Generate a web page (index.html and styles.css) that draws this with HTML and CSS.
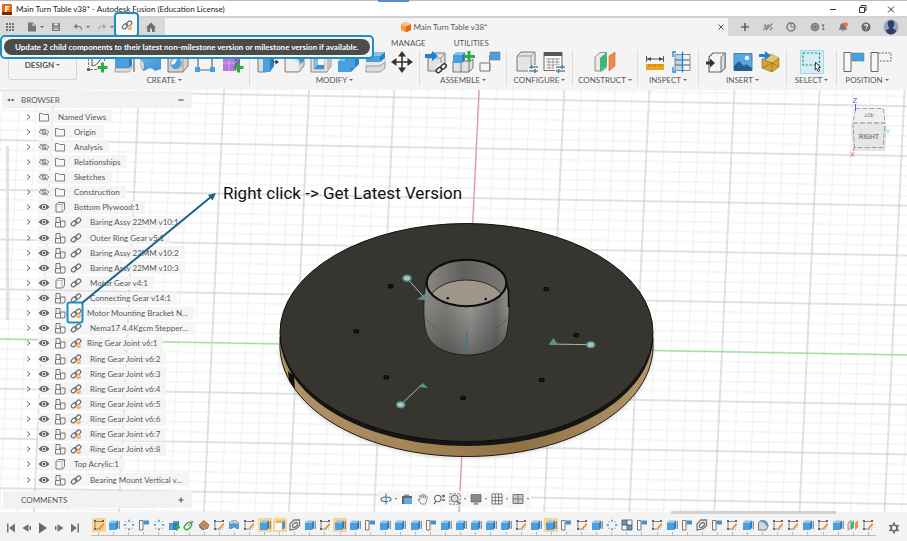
FILE: index.html
```html
<!DOCTYPE html>
<html lang="en">
<head>
<meta charset="utf-8">
<title>Main Turn Table v38* - Autodesk Fusion (Education License)</title>
<link rel="stylesheet" href="styles.css">
</head>
<body>
<svg class="sprite" aria-hidden="true">
  <defs>
    <linearGradient id="blue" x1="0" y1="0" x2="1" y2="1"><stop offset="0" stop-color="#6bb5ea"/><stop offset="1" stop-color="#3c8fd2"/></linearGradient>
    <symbol id="grid9" viewBox="0 0 12 12"><path fill="#747474" d="M2 2h2v2H2zM5 2h2v2H5zM8 2h2v2H8zM2 5h2v2H2zM5 5h2v2H5zM8 5h2v2H8zM2 8h2v2H2zM5 8h2v2H5zM8 8h2v2H8z"/></symbol>
    <symbol id="file" viewBox="0 0 12 12"><path fill="#777" d="M2 1.500h5l3 3V10.500H2z"/><path fill="#ddd" d="M6.500 2v3H9.500z"/></symbol>
    <symbol id="save" viewBox="0 0 12 12"><path fill="#7c7c7c" d="M2 2h8v8H2z"/><path fill="#ddd" d="M4 2.500h4v2H4zM3.500 6.500h5V9h-5z"/><path stroke="#7c7c7c" stroke-width=".7" d="M3 7.700h6"/></symbol>
    <symbol id="undo" viewBox="0 0 12 12"><path fill="none" stroke="#777" stroke-width="1.200" d="M3 5.500h4q2.500 0 2.500 3"/><path fill="#777" d="M1.500 5.500 5 2.800V8z"/></symbol>
    <symbol id="redo" viewBox="0 0 12 12"><path fill="none" stroke="#aaa" stroke-width="1.200" d="M9 5.500H5Q2.500 5.500 2.500 8.500"/><path fill="#aaa" d="M10.500 5.500 7 2.800V8z"/></symbol>
    <symbol id="home" viewBox="0 0 12 12"><path fill="#6f6f6f" d="M6 1.500 11 6.500H9.700V11H7V7.500H5V11H2.300V6.500H1z"/></symbol>
    <symbol id="link" viewBox="0 0 12 12"><g fill="none" stroke="#6c6c6c" stroke-width="1.200"><rect x="1" y="5.400" width="6" height="3.800" rx="1.900" transform="rotate(-42 4 7.300)"/><rect x="5" y="2.800" width="6" height="3.800" rx="1.900" transform="rotate(-42 8 4.700)"/></g></symbol>
    <symbol id="link-update" viewBox="0 0 12 12"><use href="#link"/><circle cx="8.600" cy="8.800" r="2.400" fill="#f7b24f"/><path fill="none" stroke="#fff" stroke-width=".6" d="M7.500 8.700a1.200 1.200 0 0 1 2.200 0"/></symbol>
    <symbol id="part" viewBox="0 0 12 12"><path fill="#f8973c" d="m6 .8 5 2.500V9L6 11.300 1 9V3.300z"/><path fill="#ffc38a" d="m6 .8 5 2.500-5 2.200-5-2.200z"/><path fill="#e06a1c" d="M6 5.500 11 3.300V9L6 11.300z"/></symbol>
    <symbol id="fusion" viewBox="0 0 12 12"><rect x="1" y="1" width="10" height="11" rx="1" fill="#f0630d"/><path fill="#7a2a00" d="M1 9h10v3H1z"/><path fill="#fff" d="M4 3h4.500v1.600H5.700v1h2.200v1.500H5.700V9H4z"/></symbol>
    <symbol id="plus" viewBox="0 0 12 12"><path stroke="#666" stroke-width="1.700" d="M6 2v8M2 6h8"/></symbol>
    <symbol id="cross" viewBox="0 0 12 12"><path stroke="#555" stroke-width="1" d="m3.500 3.500 5 5m0-5-5 5"/></symbol>
    <symbol id="jobs" viewBox="0 0 12 12"><path stroke="#777" stroke-width="1.100" d="M1.500 9 4.500 6M4 9l6.500-6.500M8 9l2.500-2.500M2 5.500l2-2M4.500 6 7 3.500"/></symbol>
    <symbol id="clock" viewBox="0 0 12 12"><circle cx="6" cy="6" r="4" fill="none" stroke="#777" stroke-width="1.500"/><path stroke="#777" fill="none" d="M6 3v3h3"/></symbol>
    <symbol id="badge" viewBox="0 0 12 12"><circle cx="6" cy="6" r="4.300" fill="#777"/><circle cx="6" cy="6" r="2.400" fill="none" stroke="#bbb" stroke-width=".8"/></symbol>
    <symbol id="bell" viewBox="0 0 12 12"><path fill="#777" d="M6 2Q9 2.500 9 6l1.200 2.800H1.800L3 6Q3 2.500 6 2zM4.800 9.200h2.400L6 10.500z"/><circle cx="8.800" cy="3.400" r="2.200" fill="#f37043"/></symbol>
    <symbol id="help" viewBox="0 0 12 12"><circle cx="6" cy="6" r="4.500" fill="#686868"/><path fill="none" stroke="#fff" stroke-width="1.100" d="M4.500 5Q4.700 3.500 6 3.500 7.600 3.600 7.500 5 7.400 5.800 6 6.600M6 7.600v1.200"/></symbol>
    <symbol id="avatar" viewBox="0 0 16 16"><circle cx="8" cy="8" r="7.500" fill="#93a8c4"/><path fill="#2f405d" d="M8 1.500c3 0 3.800 2 3.200 4.500-.3 1.400-1 2.300-1.700 3 .6 1.200 3 1.200 3.800 2.500Q11.500 15.500 8 15.500T2.700 11.500C3.500 10.200 5.900 10.200 6.500 9 5.500 8.300 5 7.300 4.800 6 4.200 3.500 5 1.500 8 1.500z"/></symbol>

    <symbol id="sketch-new" viewBox="0 0 24 24"><g fill="none" stroke="#777"><path d="M5 2.500h13M3.500 4v13M19.500 4v8M5 19.500h8" stroke-dasharray="3 1"/><path stroke="#555" d="M7 16V9q0-4 4-4h5q0 5-3 8t-6 3"/></g><path fill="#666" d="M2 1h3v3H2zM18 1h3v3h-3zM2 18h3v3H2z"/><path stroke="#2eab43" stroke-width="3" d="M17.500 12.500v10m-5-5h10"/></symbol>
    <symbol id="extrude" viewBox="0 0 24 24"><path fill="#85c3ef" d="m3 6 4-4h13l-3 4z"/><path fill="#4a9fe0" d="M3 6h14v15H3z"/><path fill="#2e7fbe" d="m17 6 3-4v14l-3 5z"/><path fill="#ddd" stroke="#777" stroke-width=".6" d="M3 18h14l3-3v3l-3 4H3z"/><path stroke="#444" d="M22 22V3"/><path fill="#444" d="m22 1 1.800 4h-3.600z"/></symbol>
    <symbol id="loft" viewBox="0 0 24 24"><path fill="#f5f5f5" stroke="#888" stroke-width=".8" d="M2 6Q12-1 22 4l-2 4Q12 3 4 9z"/><path fill="url(#blue)" d="M2 9q10-7 20-2v12l-6 2q-4-5-9-1l-3 1-2-4z"/><path fill="#dcebf7" stroke="#777" stroke-width=".6" d="M2 9v8l3 4v-8z"/></symbol>
    <symbol id="hole" viewBox="0 0 24 24"><path fill="#d4d4d4" stroke="#777" d="m2 7 6-5h14v14l-5 6H2z"/><path fill="none" stroke="#999" d="M2 7h15l5-5M17 7v15"/><circle cx="10" cy="13.500" r="5.300" fill="#f8f8f8" stroke="#888"/><path fill="#4a9fe0" d="M11 8.500a5 5 0 1 1-6 6q5 1 6-6z"/></symbol>
    <symbol id="boundary" viewBox="0 0 24 24"><path fill="none" stroke="#666" stroke-width="1.200" d="M5 3h14v17H5z"/><path fill="#eef" stroke="#777" d="M2 1h4v4H2zM18 1h4v4h-4z"/><path fill="#4a9fe0" d="M2 17h5v5H2zM17 17h5v5h-5z"/></symbol>
    <symbol id="form" viewBox="0 0 24 24"><path fill="#b277df" d="m3 6 5-4h12v13l-5 6H3z"/><path fill="#cf9ff0" d="m3 6 5-4h12l-5 4z"/><path fill="#8647b8" d="m15 6 5-4v13l-5 6z"/><path stroke="#d9b3f2" stroke-width=".8" fill="none" d="M9 6v15M3 13h12l5-5"/><path stroke="#2eab43" stroke-width="3" d="M18.500 12.500v10m-5-5h10"/></symbol>
    <symbol id="presspull" viewBox="0 0 24 24"><path fill="#ddd" stroke="#777" d="M3 6 7 2h4v20H3z"/><path fill="#4a9fe0" d="M8 6h7v16H8z"/><path fill="#85c3ef" d="m8 6 4-4h7l-4 4z"/><path fill="#2e7fbe" d="m15 6 4-4v14l-4 6z"/><path stroke="#333" d="M18 12h4"/><path fill="#333" d="m20.500 9.500 3.500 2.500-3.500 2.500z"/></symbol>
    <symbol id="fillet" viewBox="0 0 24 24"><path fill="#d2d2d2" stroke="#888" d="M3 9Q5 2 12 2h3q7 1 7 8v6l-5 6H3z"/><path fill="#eee" d="M4 9h7q5 1 6 7v5H4z"/><path fill="url(#blue)" d="M10 2h5q7 1 7 9l-4 3q-1-8-9-8z"/></symbol>
    <symbol id="shell" viewBox="0 0 24 24"><path fill="#e2e2e2" stroke="#888" d="m2 6 5-4h15v14l-4 6H2z"/><path fill="#c2c2c2" d="m18 6 4-4v14l-4 6z"/><path fill="#7fc0ee" stroke="#888" stroke-width=".6" d="M5 9h10v10H5z"/><path fill="#3c8fd2" d="m5 19 4-4h6v4z"/><path fill="#f6f6f6" d="M9 9h6v6H9z"/></symbol>
    <symbol id="combine" viewBox="0 0 24 24"><path fill="#4a9fe0" d="M2 11h7V6h10v12h-4v4H2z"/><path fill="#85c3ef" d="m9 6 4-4h10l-4 4zM2 11l4-4h3v4z"/><path fill="#2e7fbe" d="m19 6 4-4v12l-4 4zM15 18h4l-4 4z"/></symbol>
    <symbol id="offset" viewBox="0 0 24 24"><path fill="#4a9fe0" d="M3 6h14v6H3z"/><path fill="#85c3ef" d="m3 6 5-4h14l-5 4z"/><path fill="#2e7fbe" d="m17 6 5-4v6l-5 4z"/><path fill="#fff" stroke="#aaa" stroke-width=".5" d="M3 13h14l5-4v2l-5 4H3z"/><path fill="#ddd" stroke="#888" stroke-width=".8" d="M3 16h14l5-4v6l-5 4H3z"/></symbol>
    <symbol id="move" viewBox="0 0 24 24"><path stroke="#333" stroke-width="1.600" d="M12 4v16M4 12h16"/><path fill="#333" d="m12 1 4 5.500H8zM12 23l4-5.500H8zM1 12l5.500-4v8zM23 12l-5.500-4v8z"/></symbol>
    <symbol id="insert-link" viewBox="0 0 24 24"><path fill="#e2e2e2" stroke="#777" d="m4 8 4-5h13v13l-3 5H4z"/><path fill="none" stroke="#999" d="M4 8h13v12M17 8l4-5"/><path fill="#1e83d6" d="M1 4h7V1l6 5-6 5V8H1z"/><circle cx="17" cy="18" r="5" fill="#f4f4f4"/><g fill="none" stroke="#333" stroke-width="1.400"><rect x="12" y="18" width="6" height="4" rx="2" transform="rotate(-40 15 20)"/><rect x="16.500" y="14.500" width="6" height="4" rx="2" transform="rotate(-40 19.500 16.500)"/></g></symbol>
    <symbol id="new-component" viewBox="0 0 24 24"><path fill="#e2e2e2" stroke="#777" d="M2 11h17l3-2v9l-4 4H2z"/><path fill="none" stroke="#777" d="M10 11v11M18 12v10"/><path fill="#4a9fe0" d="M2 5h9v8H2z"/><path fill="#85c3ef" d="m2 5 3-3h9l-3 3z"/><path fill="#2e7fbe" d="m11 5 3-3v8l-3 3z"/><path stroke="#2eab43" stroke-width="3" d="M18 1v11m-5-5.500h11"/></symbol>
    <symbol id="joint" viewBox="0 0 24 24"><path fill="none" stroke="#777" d="M2 13h10v8H2z"/><path fill="none" stroke="#c07474" d="M11.500 21V5.500"/><path fill="#4a9fe0" stroke="#777" stroke-width=".6" d="M12 2h10v8H12z"/></symbol>
    <symbol id="config" viewBox="0 0 24 24"><path fill="#e4e4e4" stroke="#777" d="m3 6 4-4h14v13l-4 6H3z"/><path fill="none" stroke="#999" d="M3 6h14v14M17 6l4-4"/><path fill="#f4f4f4" d="M14 15h10v8H14z"/><path stroke="#444" d="M15 17h9M15 21h9"/><path stroke="#2b84c8" stroke-width="1.500" d="M17.500 15v4M21 19v4"/></symbol>
    <symbol id="config-table" viewBox="0 0 24 24"><path fill="#fff" stroke="#666" d="M3 2.500h18v18H3z"/><path fill="#555" d="M3 2h18v4H3z"/><path stroke="#888" stroke-width=".8" d="M5 9h14M5 12h14M5 15h14M5 18h8M8 8v11M12 8v11M16 8v7"/><path fill="#f4f4f4" d="M14 15h10v8H14z"/><path stroke="#444" d="M15 17h9M15 21h9"/><path stroke="#2b84c8" stroke-width="1.500" d="M21 15v4M17.500 19v4"/></symbol>
    <symbol id="plane" viewBox="0 0 24 24"><path fill="#e9e9e9" stroke="#777" stroke-width=".8" d="M2 7 7 2.500h6V18l-4 3H2z"/><path fill="#45b574" d="m7 8 7-6v14l-7 6z"/><path fill="#f08a50" stroke="#c86a35" stroke-width=".6" d="m16 6 6-4v14l-6 5z"/></symbol>
    <symbol id="measure" viewBox="0 0 24 24"><path fill="#eda51e" d="M3 14h18v6H3z"/><path stroke="#b97706" d="M6 14v3M9 14v2M12 14v3M15 14v2M18 14v3"/><path stroke="#555" d="M3.500 6v6M20.500 6v6M4 9h16"/><path fill="#444" d="m4 9 4-2v4zM20 9l-4-2v4z"/></symbol>
    <symbol id="section" viewBox="0 0 24 24"><path fill="#b9d9f2" d="M5 4h8v16H5z"/><path fill="none" stroke="#888" d="M5 4.500h15v5.500H5zM5 10h15v5H5zM5 15h15v5.500H5z"/><path fill="none" stroke="#1e83d6" stroke-width="1.300" d="M6 2H3v5M6 22H3v-5M12.500 1.500v21"/></symbol>
    <symbol id="derive" viewBox="0 0 24 24"><path fill="#f4f4f4" stroke="#666" stroke-width="1.200" d="m5 7 4-4h12v15l-4 4H5z"/><path fill="#ddd" stroke="#777" d="m17 7 4-4v15l-4 4z"/><path fill="#333" d="M2 11.500h4v-3L11 13l-5 4.500v-3H2z"/></symbol>
    <symbol id="canvas" viewBox="0 0 24 24"><path fill="#5ba6df" stroke="#3d84bb" d="M3 3.500h18v17H3z"/><path fill="#245f92" d="m3 16 5-5 5 5 2-2 6 4v3H3z"/><circle cx="16" cy="8" r="2.300" fill="#f4f8fb"/></symbol>
    <symbol id="mesh" viewBox="0 0 24 24"><path fill="#d2a23f" stroke="#a17824" stroke-width=".7" d="m4 9 9-5 8 4v9l-7 5-10-4z"/><path fill="#e9c46e" d="m4 9 9-5 8 4-7 5z"/><path fill="none" stroke="#98701c" stroke-width=".7" d="M14 13v9M4 9l10 4 7-5M4 18l10-5 7 4"/><path fill="#1e83d6" d="M1 4h6V1l6 4.500L7 10V7H1z"/></symbol>
    <symbol id="select" viewBox="0 0 24 24"><path fill="#d5eef6" stroke="#a3d8ea" d="M.5.500h23v23H.5z"/><path fill="none" stroke="#259a70" stroke-width="1.200" stroke-dasharray="2.500 1.500" d="M3 3h16.500v12H3z"/><path fill="#fff" stroke="#333" d="m15.500 12 5 5.500-2.200.2 1.400 3-1.500.8-1.400-3-1.700 1.500z"/></symbol>
    <symbol id="position" viewBox="0 0 24 24"><path fill="#f8f8f8" stroke="#666" d="M2 2.500h7v19H2z"/><path fill="#4a9fe0" stroke="#477" stroke-width=".5" d="M10 3h12v8H10z"/></symbol>
    <symbol id="revert" viewBox="0 0 24 24"><path fill="#f8f8f8" stroke="#666" d="M2 2.500h7v19H2z"/><path fill="none" stroke="#666" stroke-dasharray="2 1.300" d="M9.500 3H22v8H9.500"/></symbol>

    <symbol id="chevron" viewBox="0 0 12 12"><path fill="none" stroke="#666" stroke-width="1" d="m5 3.500 3 2.500-3 2.500"/></symbol>
    <symbol id="eye" viewBox="0 0 12 12"><path fill="#676767" d="M.5 6Q6-.5 11.500 6 6 12.500.5 6z"/><circle cx="6" cy="6" r="2.200" fill="#eee"/><circle cx="6" cy="6" r="1.200" fill="#555"/></symbol>
    <symbol id="eye-off" viewBox="0 0 12 12"><g fill="none" stroke="#808080" stroke-width=".9"><path d="M1 6Q6 .5 11 6 6 11.500 1 6zM2 3l8 6.500"/><circle cx="6" cy="6" r="1.800"/></g></symbol>
    <symbol id="folder" viewBox="0 0 12 12"><path fill="#f7f7f7" stroke="#808080" d="M1.500 10V2.500h3l1 1h5V10z"/></symbol>
    <symbol id="body" viewBox="0 0 12 12"><path fill="#f4f4f4" stroke="#777" d="m2 3.500 2-2h6.500V8.500L8.500 11H2z"/><path fill="none" stroke="#999" stroke-width=".7" d="M2 3.500h6V11M8 3.500l2.500-2"/></symbol>
    <symbol id="assembly" viewBox="0 0 12 12"><g fill="#f4f4f4" stroke="#777"><path d="M1.500 6.500h5V11h-5z"/><path d="M2 1.500h4v5H2z"/><path d="M6.500 5H11v5l-1 1H6.500z"/></g></symbol>

    <symbol id="t-sketch" viewBox="0 0 12 12"><path fill="none" stroke="#777" stroke-width=".9" d="M2 2.500h8M2 2v8h6"/><path fill="none" stroke="#999" stroke-width=".6" stroke-dasharray="1 1" d="M10 2v8H8"/><path fill="#666" d="M1 1h2v2H1zM9 1h2v2H9zM1 9h2v2H1z"/><path stroke="#f0862e" stroke-width="1.700" d="m6.500 9.500 4-4.500"/></symbol>
    <symbol id="t-extrude" viewBox="0 0 12 12"><path fill="#4a9fe0" d="M1 3.500h7V11H1z"/><path fill="#8ac7f0" d="m1 3.500 2-2h7l-2 2z"/><path fill="#2e7fbe" d="m8 3.500 2-2V9l-2 2z"/><path stroke="#666" d="M11.200 10V2"/></symbol>
    <symbol id="t-pattern" viewBox="0 0 12 12"><g fill="#5fa6da"><path d="M5 .8h2v2H5zM5 9.200h2v2H5zM.8 5h2v2h-2zM9.200 5h2v2h-2z"/><path fill="#9bc5e4" d="M2 2h1.600v1.600H2zM8.400 2H10v1.600H8.400zM2 8.400h1.600V10H2zM8.400 8.400H10V10H8.400z"/></g></symbol>
    <symbol id="t-flag" viewBox="0 0 12 12"><path fill="#f8f8f8" stroke="#777" d="M1.500 1.500H5v9.500H1.500z"/><path fill="#4a91c9" d="M5.500 1.500H11v4H5.500z"/></symbol>
    <symbol id="t-new" viewBox="0 0 12 12"><path fill="#4a9fe0" d="M1 4h4V2h6v4L9 11H1z"/><path fill="#2e7fbe" d="M5 4h4l2-2v5l-3 4H5z"/><path stroke="#2eab43" stroke-width="2" d="M9 5.500v6M6 8.500h6"/></symbol>
    <symbol id="t-green" viewBox="0 0 12 12"><g fill="none" stroke="#3fae5d" stroke-width="1.600"><ellipse cx="5" cy="7" rx="2.600" ry="4.300" transform="rotate(45 5 7)"/><path stroke="#777" stroke-width="1" d="m5 7 5-5M8 1.500l2.500 2.500"/></g></symbol>
    <symbol id="t-wood" viewBox="0 0 12 12"><path fill="#c78b58" stroke="#87684d" stroke-width=".8" d="m1 6 5-4.500L11 6 9.500 9.500H3z"/><path fill="#777" d="m1 8 3-3 4 5-3 1.500z"/><path stroke="#eee" stroke-width=".7" d="m3 6 4 4"/></symbol>
    <symbol id="t-loft" viewBox="0 0 12 12"><path fill="#4a9fe0" d="M1 4q5-5 10 0v6H8.500Q6 7 3.500 10H1z"/><path fill="#b9d9f2" stroke="#777" stroke-width=".6" d="M1 4q5-5 10 0L9 5.500Q6 3 3 5.500z"/></symbol>
    <symbol id="t-face" viewBox="0 0 12 12"><path fill="#f9f9f9" d="M1 4h7v7H1z"/><path fill="#e5b060" d="m1 4 2-2.500h8L8 4z"/><path fill="#3f96d9" d="m8 4 3-2.500V9l-3 2z"/></symbol>
    <symbol id="t-link" viewBox="0 0 12 12"><g fill="none" stroke="#777" stroke-width="1.300"><path d="M1 11V5l4-4h5.500v5.500L7 10z"/><ellipse cx="6" cy="6" rx="3" ry="1.800" transform="rotate(-40 6 6)"/></g></symbol>
    <symbol id="t-quad" viewBox="0 0 12 12"><path fill="#4a9fe0" stroke="#456" stroke-width=".8" d="M1 1h5v5H1zM6 6h5v5H6z"/><path fill="#f6f6f6" stroke="#555" stroke-width=".8" d="M6 1h5v5H6zM1 6h5v5H1z"/></symbol>
    <symbol id="t-fillet" viewBox="0 0 12 12"><path fill="#d7d7d7" stroke="#777" d="M1.500 11V4q1-2.500 4-2.500 5 0 5.500 6L9 11z"/><path fill="#4a9fe0" d="M5 1q6 0 6.500 6L9 7Q8 3 4 3z"/></symbol>
    <symbol id="t-plane" viewBox="0 0 12 12"><path fill="#ddd" stroke="#777" stroke-width=".7" d="m1 4 3-2.500V9L1 11z"/><path fill="#45b574" d="m4 4 3-3v7.500L4 11z"/><path fill="#f08a50" d="m8 4 3-3v7.500L8 11z"/></symbol>

    <symbol id="p-start" viewBox="0 0 12 12"><path fill="#737373" d="M2 1.500h1.500v9H2zM10 1.500v9L4 6z"/></symbol>
    <symbol id="p-back" viewBox="0 0 12 12"><path fill="#737373" d="M1.500 6 7.500 2v8zM8.500 4H10v4H8.500z"/></symbol>
    <symbol id="p-play" viewBox="0 0 12 12"><path fill="#686868" d="M2 .5 10 6l-8 5.500z"/></symbol>
    <symbol id="gear" viewBox="0 0 12 12"><circle cx="6" cy="6" r="3" fill="none" stroke="#666" stroke-width="1.700"/><path stroke="#666" stroke-width="1.800" d="M6 .6v2M6 9.400v2M1.300 3.300 3 4.300M9 7.700l1.700 1M1.300 8.700 3 7.700M9 4.300l1.700-1"/></symbol>

    <symbol id="n-orbit" viewBox="0 0 12 12"><path fill="none" stroke="#666" stroke-width="1.100" d="M8 8.500Q1 9 1 6.200 1 4 6 4t5 2.200q0 1.200-2 1.800"/><path stroke="#3a8fc9" stroke-width="1.200" d="M6 .5v11"/></symbol>
    <symbol id="n-look" viewBox="0 0 12 12"><path fill="#666" d="M1 3h10v8H1z"/><path fill="#5aace2" d="M3 5h8v6H3z"/><path fill="#888" d="M3 1.500h5V3H3z"/></symbol>
    <symbol id="n-pan" viewBox="0 0 12 12"><path fill="#f6f6f6" stroke="#888" stroke-width=".9" d="M4 11 1 6.500q1-.8 2 .5L2.700 2.500q1-.6 1.400.8L4.600 5 5 1.300q1-.6 1.300.3L6.500 5l1-3.200q1.100-.2 1 .8L8.200 5.500l1.500-2q1 0 .8 1L8.500 11z"/></symbol>
    <symbol id="n-zoom" viewBox="0 0 12 12"><circle cx="4.800" cy="5.500" r="3.200" fill="none" stroke="#666" stroke-width="1.100"/><path stroke="#666" stroke-width="1.300" d="M3 8 1 11M9 3h3M10.500 1.500v3M9 7h3"/></symbol>
    <symbol id="n-fit" viewBox="0 0 12 12"><path fill="none" stroke="#777" stroke-width=".9" stroke-dasharray="2.500 1.200" d="M.8.800h10.400v10.400H.8z"/><circle cx="5.700" cy="5.500" r="3.500" fill="#ddd" stroke="#666"/><path stroke="#666" stroke-width="1.500" d="m8 8 3 3"/></symbol>
    <symbol id="n-display" viewBox="0 0 12 12"><path fill="#888" stroke="#666" stroke-width=".7" d="M1 1.500h10v7.500H1z"/><path stroke="#666" d="M6 9v2M3.500 11h5"/></symbol>
    <symbol id="n-grid" viewBox="0 0 12 12"><path fill="#fff" stroke="#666" stroke-width=".9" d="M1 1h10v10H1zM1 4.300h10M1 7.600h10M4.300 1v10M7.600 1v10"/></symbol>
    <symbol id="n-views" viewBox="0 0 12 12"><path fill="#ccc" stroke="#777" d="M1 1.500h10v9H1zM6 1.500v9M1 6h10"/></symbol>
    <symbol id="restore" viewBox="0 0 12 12"><path fill="none" stroke="#333" d="M3.500 4.500h5v5h-5zM5 4V2.500h5v5H9"/></symbol>
    <symbol id="minimize" viewBox="0 0 12 12"><path stroke="#333" d="M3 6.500h6"/></symbol>
    <symbol id="close" viewBox="0 0 12 12"><path stroke="#333" stroke-width="1" d="m3 3.500 6 6m0-6-6 6"/></symbol>
  </defs>
</svg>

<header class="titlebar">
  <svg class="i12"><use href="#fusion"/></svg>
  <h1>Main Turn Table v38* - Autodesk Fusion (Education License)</h1>
  <div class="window-buttons">
    <button aria-label="Minimize"><svg class="i12"><use href="#minimize"/></svg></button>
    <button aria-label="Restore"><svg class="i12"><use href="#restore"/></svg></button>
    <button aria-label="Close"><svg class="i12"><use href="#close"/></svg></button>
  </div>
</header>

<div class="tabbar">
  <div class="quick">
    <button aria-label="Data panel"><svg class="i12"><use href="#grid9"/></svg></button>
    <button class="drop" aria-label="File"><svg class="i12"><use href="#file"/></svg></button>
    <button aria-label="Save"><svg class="i12"><use href="#save"/></svg></button>
    <button class="drop" aria-label="Undo"><svg class="i12"><use href="#undo"/></svg></button>
    <button class="drop" aria-label="Redo"><svg class="i12"><use href="#redo"/></svg></button>
    <button class="update" aria-label="Get all latest"><svg class="i12"><use href="#link-update"/></svg></button>
    <button aria-label="Home"><svg class="i12"><use href="#home"/></svg></button>
  </div>
  <div class="doc-tab">
    <span class="doc-name"><svg class="i12"><use href="#part"/></svg>Main Turn Table v38*</span>
    <button aria-label="Close tab"><svg class="i12"><use href="#cross"/></svg></button>
  </div>
  <div class="status">
    <button aria-label="New tab"><svg class="i12"><use href="#plus"/></svg></button>
    <button aria-label="Extensions"><svg class="i12"><use href="#jobs"/></svg></button>
    <button aria-label="Job status"><svg class="i12"><use href="#clock"/></svg></button>
    <button aria-label="Online"><svg class="i12"><use href="#badge"/></svg>1</button>
    <button aria-label="Notifications"><svg class="i12"><use href="#bell"/></svg></button>
    <button aria-label="Help"><svg class="i12"><use href="#help"/></svg></button>
    <button aria-label="Account"><svg class="i16"><use href="#avatar"/></svg></button>
  </div>
</div>

<section class="ribbon">
  <nav class="ribbon-tabs"><a href="#manage">MANAGE</a><a href="#utilities">UTILITIES</a></nav>
  <div class="groups" id="groups">
    <button class="design caret">DESIGN</button>
  </div>
  <div class="callout"><p role="tooltip">Update 2 child components to their latest non-milestone version or milestone version if available.</p></div>
</section>

<main class="workspace">
  <svg class="scene" viewBox="0 90 907 422" preserveAspectRatio="xMinYMin slice" role="img" aria-label="Turntable model">
    <defs>
      <pattern id="floor" width="85" height="49.700" patternUnits="userSpaceOnUse" patternTransform="matrix(1 .0176 -.0475 1 467 347.200)">
        <path fill="none" stroke="#ebebed" stroke-width=".8" d="M17 0v50M34 0v50M51 0v50M68 0v50M0 9.900h85M0 19.900h85M0 29.800h85M0 39.800h85"/>
        <path fill="none" stroke="#c6c6c9" stroke-width="1" d="M0 0v50M0 0h85M85 0v50M0 49.700h85"/>
      </pattern>
      <linearGradient id="wall"><stop offset="0" stop-color="#8a8885"/><stop offset=".25" stop-color="#7b7976"/><stop offset=".55" stop-color="#989693"/><stop offset=".85" stop-color="#6f6d6b"/><stop offset="1" stop-color="#92908d"/></linearGradient>
      <linearGradient id="shade" x1="0" y1="0" x2="0" y2="1"><stop offset=".3" stop-color="#333" stop-opacity="0"/><stop offset="1" stop-color="#222" stop-opacity=".4"/></linearGradient>
      <linearGradient id="inner"><stop offset="0" stop-color="#8a8886"/><stop offset=".45" stop-color="#62605e"/><stop offset="1" stop-color="#7c7a77"/></linearGradient>
      <linearGradient id="wood"><stop offset="0" stop-color="#b09468"/><stop offset=".35" stop-color="#a58556"/><stop offset=".65" stop-color="#8f7144"/><stop offset="1" stop-color="#b4986c"/></linearGradient>
      <clipPath id="rim"><ellipse cx="466.500" cy="283" rx="39.500" ry="23"/></clipPath>
      <filter id="soft"><feGaussianBlur stdDeviation="2"/></filter>
    </defs>
    <rect x="0" y="90" width="907" height="422" fill="#fff"/>
    <rect x="0" y="90" width="907" height="422" fill="url(#floor)"/>
    <path stroke="#8ee98e" d="m0 339 907 16"/>
    <path stroke="#ee8c92" d="m479 90-20 422"/>
    <ellipse cx="466.500" cy="350" rx="186" ry="108" fill="#bbb" opacity=".6" filter="url(#soft)"/>
    <path fill="url(#wood)" stroke="#1c1914" d="M280 337v12C284 410 366 456.500 466.500 456.500S650 410 653 349v-12z"/>
    <path fill="#151514" d="M280 334v5C284 399 366 446 466.500 446S650 399 653 339v-5z"/>
    <ellipse cx="466.500" cy="332.500" rx="186.500" ry="109" fill="#373530" stroke="#0e0e0d"/>
    <path fill="#111" d="m288 371 6 5 1 13-6-8z"/>
    <g fill="#1d1c1a" stroke="#0b0b0b" stroke-width="1.400"><ellipse cx="390.700" cy="286.300" rx="2.300" ry="1.600"/><ellipse cx="356.300" cy="331.300" rx="2.300" ry="1.600"/><ellipse cx="386.300" cy="377.300" rx="2.300" ry="1.600"/><ellipse cx="463" cy="397.700" rx="2.300" ry="1.600"/><ellipse cx="541.700" cy="380" rx="2.300" ry="1.600"/><ellipse cx="576.300" cy="335" rx="2.300" ry="1.600"/><ellipse cx="546.300" cy="289" rx="2.300" ry="1.600"/></g>
    <path fill="url(#wall)" d="M426 283C423 300 423 325 427 335 433 349 450 355 467 355S501 349 506 336C510 320 510 300 507 283z"/>
    <path fill="url(#shade)" stroke="#111" stroke-width=".8" d="M426 283C423 300 423 325 427 335 433 349 450 355 467 355S501 349 506 336C510 320 510 300 507 283z"/>
    <path fill="none" stroke="#555" stroke-width=".7" d="M425 318q5 7 14 12M508 317q-4 7-13 12"/>
    <ellipse cx="466.500" cy="283" rx="39.500" ry="23" fill="url(#inner)"/>
    <g clip-path="url(#rim)"><ellipse cx="466.500" cy="303" rx="38" ry="23" fill="#9e9688" stroke="#2b2926"/><circle cx="447.700" cy="298.300" r="1.300" fill="#111"/><circle cx="485.700" cy="299" r="1.300" fill="#111"/></g>
    <ellipse cx="466.500" cy="283" rx="39.800" ry="23.200" fill="none" stroke="#0b0b0b" stroke-width="2"/>
    <path fill="none" stroke="#0b0b0b" stroke-width="1.500" d="m506 283 2.500 7v17"/>
    <g stroke="#a3b7b5" fill="none"><path d="m407 278.300 17 19M400.700 404.700l19-18M590.700 344.700 549 344"/><path stroke="#35807e" stroke-width="1.500" d="M466.700 332v20"/></g>
    <g fill="#5a918e"><path d="m425 294v6l-8-.5zM423 383l5 5-10-1zM549 344l4.500-6 4 6z"/></g>
    <g fill="#aac6c4" stroke="#4f8886" stroke-width="1.600"><ellipse cx="407" cy="278.300" rx="4" ry="3"/><ellipse cx="400.700" cy="404.700" rx="4" ry="3"/><ellipse cx="590.700" cy="344.700" rx="4" ry="3"/></g>
  </svg>

  <aside class="browser">
    <div class="panel-bar"><button aria-label="Collapse"><svg class="i12"><path fill="#555" d="m6 4.500-3 1.500 3 1.500zM9.500 4.500l-3 1.500 3 1.500z"/></svg></button><h2>BROWSER</h2><button aria-label="Hide browser"><svg class="i12"><path stroke="#555" stroke-width="1.200" d="M3.500 6h5"/></svg></button></div>
    <ul class="tree" id="tree"></ul>
    <div class="panel-bar"><h2 class="comments">COMMENTS</h2><button aria-label="Add comment"><svg class="i12"><path stroke="#555" stroke-width="1.200" d="M3.500 6h5M6 3.500v5"/></svg></button></div>
  </aside>

  <div class="viewcube">
    <svg viewBox="845 92 50 68" role="img" aria-label="View cube">
      <path fill="#ccc" opacity=".5" d="M851 125h36l-2 26h-32z"/>
      <path fill="#f0f0f0" stroke="#999" stroke-width=".9" stroke-dasharray="5 2" d="M855.500 108.500h28l1.500 14.500h-32z"/>
      <path fill="#e6e6e6" stroke="#999" stroke-width=".9" stroke-dasharray="5 2" d="M853 123h32l-2 24.500h-28.500z"/>
      <path stroke="#5b5be0" d="M855.500 104v7"/><path stroke="#8ee98e" d="M884 131h3"/><path stroke="#f26d6d" d="m854.500 147-1.500 4"/>
      <text class="face" x="869" y="138.500">RIGHT</text><text class="top" x="869" y="-113">TOP</text>
      <text class="z" x="855" y="103">Z</text><text class="y" x="888" y="134">Y</text><text class="x" x="852.500" y="156.500">X</text>
    </svg>
  </div>

  <div class="navbar">
    <button class="drop" aria-label="Orbit"><svg class="i12"><use href="#n-orbit"/></svg></button>
    <button aria-label="Look at"><svg class="i12"><use href="#n-look"/></svg></button>
    <button aria-label="Pan"><svg class="i12"><use href="#n-pan"/></svg></button>
    <button aria-label="Zoom"><svg class="i12"><use href="#n-zoom"/></svg></button>
    <button class="drop" aria-label="Fit"><svg class="i12"><use href="#n-fit"/></svg></button>
    <button class="drop" aria-label="Display settings"><svg class="i12"><use href="#n-display"/></svg></button>
    <button class="drop" aria-label="Grid and snaps"><svg class="i12"><use href="#n-grid"/></svg></button>
    <button class="drop" aria-label="Viewports"><svg class="i12"><use href="#n-views"/></svg></button>
  </div>

  <svg class="pointer" viewBox="60 180 170 150" aria-hidden="true">
    <rect x="67.500" y="302.500" width="15" height="20" rx="2" fill="none" stroke="#1f8fc4" stroke-width="2"/>
    <path stroke="#1b6484" stroke-width="2" d="m82 303 130-107"/><path fill="#1b6484" d="m216 193-3.500 7.500-4.500-5.500z"/>
  </svg>
  <p class="note">Right click -&gt; Get Latest Version</p>
</main>

<footer class="timeline">
  <div class="player">
    <button aria-label="To start"><svg class="i12"><use href="#p-start"/></svg></button>
    <button aria-label="Step back"><svg class="i12"><use href="#p-back"/></svg></button>
    <button aria-label="Play"><svg class="i12"><use href="#p-play"/></svg></button>
    <button class="flip" aria-label="Step forward"><svg class="i12"><use href="#p-back"/></svg></button>
    <button class="flip" aria-label="To end"><svg class="i12"><use href="#p-start"/></svg></button>
  </div>
  <ol class="track" id="track"></ol>
  <button class="settings" aria-label="Timeline settings"><svg class="i12"><use href="#gear"/></svg></button>
  <div class="scroll-thumb"></div>
</footer>
<script src="app.js"></script>
</body>
</html>
```
FILE: styles.css
```css
* { box-sizing: border-box; margin: 0; padding: 0; }
body {
  display: grid;
  grid-template-rows: 16px 20px 54px 1fr 29px;
  min-height: 100vh;
  background: #f4f4f4;
  color: #585858;
  font: 8px/12px Lato, "Liberation Sans", sans-serif;
}
button { display: flex; align-items: center; border: 0; background: none; font: inherit; color: inherit; }
ul, ol { list-style: none; }
a { color: inherit; text-decoration: none; }
h1, h2 { font: inherit; }
.sprite { position: absolute; width: 0; height: 0; }
.i12 { display: block; flex: none; width: 12px; height: 12px; }
.i16 { display: block; flex: none; width: 16px; height: 16px; }
.i24 { display: block; flex: none; width: 24px; height: 24px; }
.drop::after, .caret::after {
  content: "";
  flex: none;
  margin-left: 2px;
  border: 2px solid transparent;
  border-top-color: #666;
  border-bottom: 0;
}

.titlebar {
  display: flex;
  align-items: center;
  padding: 1px 10px 0 1px;
  background:
    linear-gradient(#5b8fc4, #5b8fc4) 378px 0 / 31px 2px no-repeat,
    linear-gradient(#bdbdbd, #bdbdbd) 0 0 / 100% 1px no-repeat,
    #fff;
  color: #222;
}
.titlebar h1 { flex: 1; padding-left: 3px; white-space: nowrap; }
.window-buttons { display: flex; gap: 17px; }

.tabbar { display: flex; border-top: 2px solid #d2d2d2; background: #d9d9d9; }
.quick { display: flex; align-items: center; width: 165px; padding-left: 4px; }
.quick button { margin-right: 10px; }
.quick .drop { margin-right: 6px; }
.quick .drop + .drop { margin-right: 0; }
.quick .update {
  position: relative;
  z-index: 3;
  justify-content: center;
  flex: none;
  width: 25px;
  height: 25px;
  margin: -5px 6px 0 0;
  border: 2px solid #1f8fc0;
  border-radius: 4px;
  background: #f8f8f8;
}
.doc-tab { display: flex; flex: 1; align-items: center; padding-right: 1px; background: #f4f4f4; }
.doc-name { display: flex; flex: 1; align-items: center; justify-content: center; gap: 1px; padding-left: 8px; }
.status { display: flex; align-items: center; justify-content: space-between; width: 179px; padding: 0 8px 0 11px; }

.ribbon { position: relative; display: flex; flex-direction: column; }
.ribbon-tabs { display: flex; gap: 28px; height: 14px; padding-left: 391px; align-items: center; }
.groups {
  display: grid;
  flex: 1;
  grid-template-columns: 79fr 170fr 170fr 87fr 66fr 65fr 61fr 88fr 50fr 61fr;
  padding-right: 10px;
}
.design { justify-content: center; margin: 0 2px 10px 8px; border: 1px solid #d4d4d4; border-top: 0; border-radius: 3px; font-weight: bold; }
.group { display: flex; flex-direction: column; align-items: center; }
.group + .group { border-left: 1px solid #dcdcdc; margin-bottom: 4px; }
.tools { display: flex; gap: 3px; }
.menu { height: 12px; }
.callout {
  position: absolute;
  z-index: 2;
  top: -1px;
  left: 0;
  padding: 2px;
  border: 2px solid #1f8fc0;
  border-radius: 5px;
  background: #f4f4f4;
}
.callout p {
  padding: 1px 11px;
  border-radius: 8px;
  background: #4b4b4b;
  color: #fff;
  font-weight: bold;
  line-height: 14px;
  white-space: nowrap;
}

.workspace { position: relative; display: grid; overflow: hidden; }
.scene { position: absolute; width: 100%; height: 100%; }
.browser { position: relative; display: flex; flex-direction: column; gap: 1px; width: 189px; margin: 1px 0 4px 3px; }
.panel-bar { display: flex; align-items: center; height: 17px; padding: 0 5px 0 1px; background: #f2f2f2; }
.panel-bar h2 { flex: 1; padding-left: 5px; }
.panel-bar .comments { padding-left: 17px; }
.tree { display: flex; flex: 1; flex-direction: column; margin: 0 0 3px 3px; background: linear-gradient(#e2e2e2, #e2e2e2) 0 37px / 3px 174px no-repeat; }
.tree li { display: flex; flex: 1 0 15px; align-items: center; padding-left: 16px; }
.row { display: flex; align-items: center; gap: 4px; height: 13px; margin-left: 4px; padding-right: 6px; background: rgba(244, 244, 244, .9); white-space: nowrap; }
.row span { padding-left: 4px; }
.row .flush { padding-left: 1px; }
.viewcube { position: absolute; top: 2px; right: 12px; width: 50px; }
.viewcube svg { display: block; width: 50px; height: 68px; }
.viewcube text { text-anchor: middle; font: 8px Roboto, sans-serif; fill: #777; }
.viewcube .face { font-size: 7px; font-weight: 500; }
.viewcube .top { font-size: 5px; transform: scaleY(-1); }
.viewcube .z { fill: #5b5be0; }
.viewcube .y { fill: #8ee98e; }
.viewcube .x { fill: #f26d6d; }
.navbar { position: absolute; bottom: 6px; left: 50%; display: flex; align-items: center; gap: 4px; height: 15px; padding: 0 2px; margin-left: -76px; background: rgba(246, 246, 246, .9); }
.navbar .drop::after { margin-left: 3px; border-width: 2px 1px 0; }
.pointer { position: absolute; top: 90px; left: 60px; width: 170px; height: 150px; pointer-events: none; }
.note { position: absolute; top: 92px; left: 223px; color: #111; font: 17px/22px Roboto, sans-serif; white-space: nowrap; }

.timeline { position: relative; display: flex; align-items: stretch; background: #f3f3f3; }
.player { display: flex; align-items: center; gap: 4px; padding: 3px 0 0 5px; width: 91px; }
.player button { width: 12px; }
.flip { transform: scaleX(-1); }
.track { display: flex; flex: 1; align-self: flex-start; margin-top: 6px; border-bottom: 1px solid #bbb; }
.track li { display: flex; flex: 1; flex-direction: column; align-items: center; }
.track li::after { content: ""; width: 1px; height: 3px; background: #bbb; }
.track svg { box-sizing: content-box; padding: 1px; }
.track .active svg { background: #fbd394; }
.settings { align-self: center; margin: 3px 7px 0 12px; }
.scroll-thumb { position: absolute; top: -1px; left: 74%; width: 18.2%; height: 3px; background: #d2d2d2; }
```
FILE: app.js
```js
const icon = (name, size = 'i12') => `<svg class="${size}"><use href="#${name}"/></svg>`;

const groups = [
  ['CREATE', 'sketch-new extrude loft hole boundary form'],
  ['MODIFY', 'presspull fillet shell combine offset move'],
  ['ASSEMBLE', 'insert-link new-component joint'],
  ['CONFIGURE', 'config config-table'],
  ['CONSTRUCT', 'plane'],
  ['INSPECT', 'measure section'],
  ['INSERT', 'derive canvas mesh'],
  ['SELECT', 'select'],
  ['POSITION', 'position revert'],
];
document.getElementById('groups').insertAdjacentHTML('beforeend', groups.map(([name, tools]) =>
  `<div class="group"><div class="tools">${tools.split(' ').map(t =>
    `<button aria-label="${t}">${icon(t, 'i24')}</button>`).join('')}</div><button class="menu caret">${name}</button></div>`).join(''));

// Each row: icons in front of the label, then the label.
const part = 'eye assembly link';
const stale = 'eye assembly link-update';
const rows = [
  ['folder', 'Named Views'],
  ['eye-off folder', 'Origin'],
  ['eye-off folder', 'Analysis'],
  ['eye-off folder', 'Relationships'],
  ['eye-off folder', 'Sketches'],
  ['eye-off folder', 'Construction'],
  ['eye body', 'Bottom Plywood:1'],
  [part, 'Baring Assy 22MM v10:1'],
  [part, 'Outer Ring Gear v5:1'],
  [part, 'Baring Assy 22MM v10:2'],
  [part, 'Baring Assy 22MM v10:3'],
  ['eye body link', 'Motor Gear v4:1'],
  [part, 'Connecting Gear v14:1'],
  [stale, 'Motor Mounting Bracket N...', 'flush'],
  [part, 'Nema17 4.4Kgcm Stepper...'],
  [stale, 'Ring Gear Joint v6:1', 'flush'],
  ...[2, 3, 4, 5, 6, 7, 8].map(n => [stale, `Ring Gear Joint v6:${n}`]),
  ['eye body', 'Top Acrylic:1'],
  [part, 'Bearing Mount Vertical v...'],
];
document.getElementById('tree').innerHTML = rows.map(([icons, label, cls = '']) =>
  `<li><button aria-label="Expand ${label}">${icon('chevron')}</button><div class="row">${
    icons.split(' ').map(i => icon(i)).join('')}<span class="${cls}">${label}</span></div></li>`).join('');

// Features in build order; a star marks a highlighted one.
const features = `sketch* extrude pattern flag pattern new green wood sketch loft sketch extrude* face* link
  extrude sketch extrude* extrude flag extrude extrude extrude flag extrude extrude extrude extrude extrude
  sketch extrude extrude* flag sketch extrude pattern quad flag sketch extrude flag link flag sketch extrude
  fillet sketch sketch extrude sketch extrude plane sketch`.split(/\s+/);
document.getElementById('track').innerHTML = features.map(f =>
  `<li class="${f.endsWith('*') ? 'active' : ''}">${icon('t-' + f.replace('*', ''))}</li>`).join('');
```
